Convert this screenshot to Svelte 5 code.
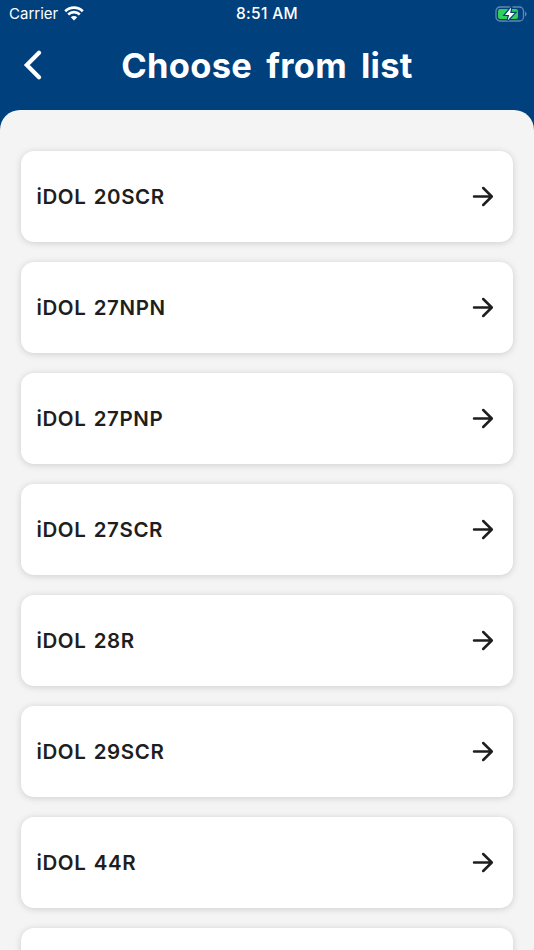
<script lang="ts">
	const items = [
		{ name: "iDOL 20SCR" },
		{ name: "iDOL 27NPN" },
		{ name: "iDOL 27PNP" },
		{ name: "iDOL 27SCR" },
		{ name: "iDOL 28R" },
		{ name: "iDOL 29SCR" },
		{ name: "iDOL 44R" },
		{ name: "" }
	];
</script>

<div class="screen">
	<div class="status-bar">
		<div class="carrier">
			<span>Carrier</span>
			<svg class="wifi" width="20" height="15" viewBox="0 0 20 15" aria-hidden="true">
				<path d="M1.2 5.2a12.6 12.6 0 0 1 17.6 0" />
				<path d="M4.2 8.5a8.3 8.3 0 0 1 11.6 0" />
				<path class="dot" d="M6.8 11.3a4.6 4.6 0 0 1 6.4 0L10 14.6z" />
			</svg>
		</div>
		<span class="time">8:51 AM</span>
		<svg class="battery" width="32" height="16" viewBox="0 0 32 16" aria-hidden="true">
			<rect class="shell" x="1" y="1" width="27.5" height="14" rx="4" />
			<path class="cap" d="M30 5.5c2 .8 2 4.2 0 5z" />
			<rect class="level" x="3" y="3" width="20" height="10" rx="2.2" />
			<path class="bolt" d="M16.2 1.5 10 8.9h4.2L12.6 14.5 19.6 7h-4.4z" />
		</svg>
	</div>

	<header>
		<button class="back" aria-label="Back">
			<svg width="20" height="30" viewBox="0 0 20 30" aria-hidden="true">
				<path d="M16 2.8 3.8 15 16 27.2" />
			</svg>
		</button>
		<h1>Choose from list</h1>
	</header>

	<main>
		{#each items as item}
			<button class="card">
				<span>{item.name}</span>
				<svg width="24" height="24" viewBox="0 0 24 24" aria-hidden="true">
					<path d="M3 12.5h17.5M12.2 4l8.6 8.5-8.6 8.5" />
				</svg>
			</button>
		{/each}
	</main>
</div>

<style>
	:global(body) {
		background: #00407d;
	}

	.screen {
		display: flex;
		flex-direction: column;
		height: 950px;
		overflow: hidden;
		background: #00407d;
		color: #fff;
		font-family: Inter, "Liberation Sans", sans-serif;
	}

	.status-bar {
		display: grid;
		grid-template-columns: 1fr auto 1fr;
		align-items: center;
		flex: none;
		height: 27px;
		padding: 0 7px 0 9px;
		box-sizing: border-box;
		font-size: 15.5px;
	}

	.carrier {
		display: flex;
		align-items: center;
		gap: 6px;
		font-size: 15px;
	}

	.wifi path {
		fill: none;
		stroke: #fff;
		stroke-width: 2.6;
	}

	.wifi .dot {
		fill: #fff;
		stroke: none;
	}

	.time {
		margin-right: 2px;
		font-weight: 500;
		letter-spacing: 0.35px;
	}

	.battery {
		justify-self: end;
	}

	.shell {
		fill: none;
		stroke: #6088b0;
		stroke-width: 1.3;
	}

	.cap {
		fill: #6088b0;
	}

	.level {
		fill: #30d158;
	}

	.bolt {
		fill: #fff;
		stroke: #00407d;
		stroke-width: 2.4;
		paint-order: stroke;
	}

	header {
		display: grid;
		grid-template-columns: 60px 1fr 60px;
		align-items: center;
		flex: none;
		height: 83px;
		padding-bottom: 7px;
		box-sizing: border-box;
	}

	button {
		border: 0;
		font-family: inherit;
		text-align: left;
	}

	.back {
		display: flex;
		padding: 0 0 0 23px;
		background: none;
	}

	.back path {
		fill: none;
		stroke: #fff;
		stroke-width: 4.2;
		stroke-linecap: round;
	}

	h1 {
		margin: 0;
		padding-top: 1px;
		text-align: center;
		font-size: 34.5px;
		font-weight: 700;
		line-height: 42px;
		letter-spacing: 0.3px;
		word-spacing: 5.5px;
		white-space: nowrap;
	}

	main {
		display: flex;
		flex-direction: column;
		gap: 20.5px;
		flex: 1;
		min-height: 0;
		padding: 41px 21px 0;
		border-radius: 20px 20px 0 0;
		background: #f4f4f4;
	}

	.card {
		display: flex;
		align-items: center;
		justify-content: space-between;
		flex: none;
		height: 90.5px;
		padding: 0 18px 0 15.5px;
		border-radius: 13px;
		background: #fff;
		box-shadow: 0 1px 7px rgba(0, 0, 0, 0.16);
		color: #1e1e1e;
		font-size: 20.5px;
		font-weight: 600;
		letter-spacing: 0.6px;
		word-spacing: 1.5px;
	}

	.card path {
		fill: none;
		stroke: #1e1e1e;
		stroke-width: 2.5;
		stroke-linecap: round;
		stroke-linejoin: round;
	}
</style>
